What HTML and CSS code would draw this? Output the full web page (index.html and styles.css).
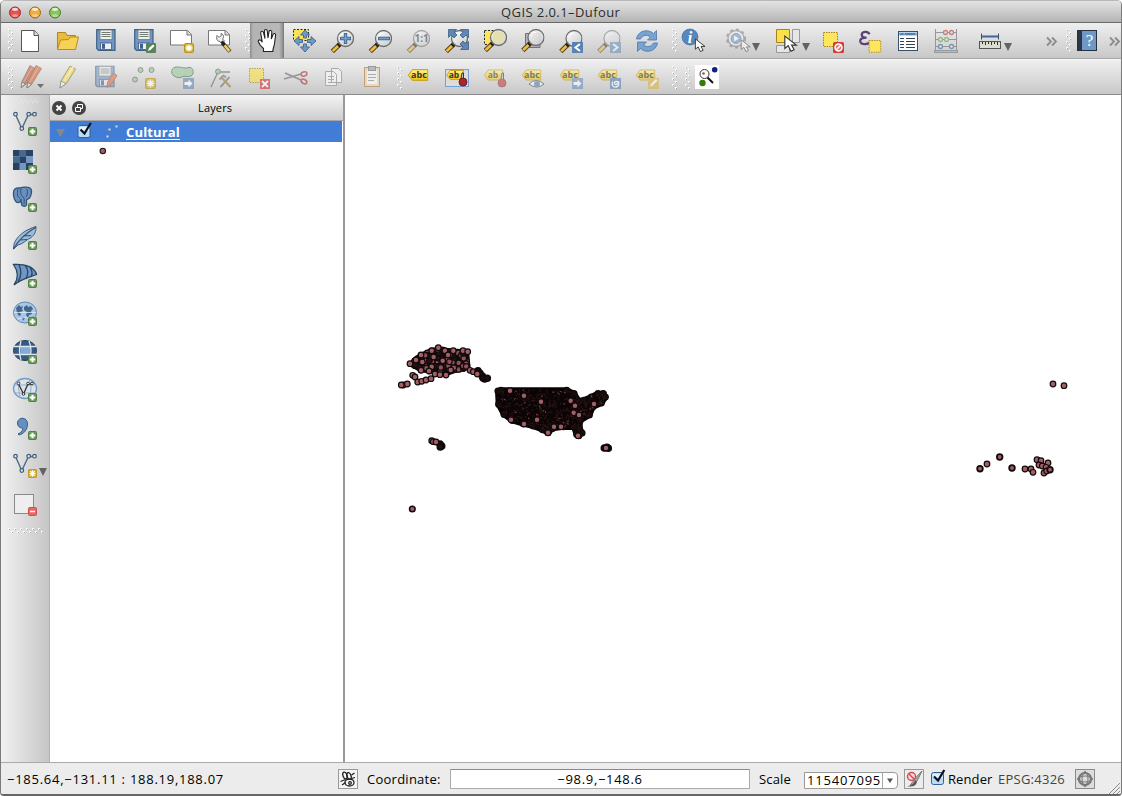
FILE: index.html
```html
<!DOCTYPE html>
<html lang="en">
<head>
<meta charset="utf-8">
<title>QGIS 2.0.1-Dufour</title>
<link rel="stylesheet" href="styles.css">
</head>
<body>
<svg class="defs" width="0" height="0" aria-hidden="true">
  <defs>
    <linearGradient id="lens" x1="0" y1="0" x2="1" y2="1"><stop offset="0" stop-color="#fff"/><stop offset="1" stop-color="#c9c9c9"/></linearGradient>
    <linearGradient id="tag" x1="0" y1="0" x2="0" y2="1"><stop offset="0" stop-color="#fff3a0"/><stop offset=".5" stop-color="#f8d93a"/><stop offset="1" stop-color="#efc51c"/></linearGradient>
    <pattern id="gripV" width="6" height="6" patternUnits="userSpaceOnUse"><rect width="2" height="2" fill="#fafafa"/><rect x="1" y="1" width="1" height="1" fill="#a8a8a8"/><rect x="3" y="3" width="2" height="2" fill="#fafafa"/><rect x="4" y="4" width="1" height="1" fill="#a8a8a8"/></pattern>
    <symbol id="grip" viewBox="0 0 6 24"><rect width="6" height="24" fill="url(#gripV)"/></symbol>
    <symbol id="gripH" viewBox="0 0 36 6"><rect width="36" height="6" fill="url(#gripV)"/></symbol>
    <symbol id="plus" viewBox="0 0 9 9"><rect x=".5" y=".5" width="8" height="8" rx="1" fill="#6c9a5c" stroke="#4f7f45"/><path d="M4.5 1.7v5.6M1.7 4.5h5.6" stroke="#fff" stroke-width="2"/></symbol>
    <symbol id="star" viewBox="0 0 10 10"><rect x=".5" y=".5" width="9" height="9" rx="1" fill="#d6ac28" stroke="#bd9414"/><path d="M5 1.4v7.2M1.4 5h7.2M2.5 2.5l5 5M7.500 2.500l-5 5" stroke="#fff" stroke-width="1.3"/></symbol>
    <symbol id="mag" viewBox="0 0 24 24"><path d="M2.300 22L10 14.500" stroke="#514529" stroke-width="4.600"/><path d="M2.700 21.600L8.500 16" stroke="#f3bd3c" stroke-width="2.700"/><path d="M8 16.500l3-3" stroke="#222" stroke-width="4"/><circle cx="15.500" cy="9" r="8" fill="url(#lens)" fill-opacity=".88" stroke="#6d6d6d" stroke-width="1.300"/><path d="M10.500 8a5 5 0 0 1 5-4" fill="none" stroke="#fff"/></symbol>
    <symbol id="cursor" viewBox="0 0 13 16"><path d="M1 1v11l3-2.500 2.500 5 2.800-1.400L7 9h4.300z" fill="#fff" stroke="#333"/></symbol>
    <symbol id="floppy" viewBox="0 0 20 22"><path d="M1 .7h18v20.600H2.500L.7 19.500V.7z" fill="#6f96c4" stroke="#3d6188" stroke-width="1.200"/><rect x="4" y="1" width="12" height="9.500" fill="#f1f1ea" stroke="#6a7a80" stroke-width=".8"/><path d="M5.500 3.500h9M5.500 5.500h9M5.500 7.500h9" stroke="#717c74"/><rect x="4.500" y="14" width="11" height="6.500" fill="#eeeef5" stroke="#42597d" stroke-width=".8"/><path d="M6 14.700h3v5H6z" fill="#415d8b"/></symbol>
    <symbol id="label" viewBox="0 0 21 13"><path d="M.7 6.300L5 .7h15.300v10.600H5z" fill="url(#tag)" stroke="#c49b12"/></symbol>
    <symbol id="vee" viewBox="0 0 24 20"><path d="M2.500 3l6.300 14L15.500 3h6" fill="none" stroke="#506c87" stroke-width="1.400"/><g fill="#dce5ed" stroke="#3c5a78" stroke-width="1.200"><circle cx="2.500" cy="2.700" r="1.800"/><circle cx="8.800" cy="17" r="1.800"/><circle cx="15.700" cy="2.700" r="1.800"/><circle cx="21.500" cy="2.700" r="1.800"/></g></symbol>
    <symbol id="arrowBadge" viewBox="0 0 11 11"><rect width="11" height="11" fill="#6f91bd"/><path d="M1.500 4h4V1.500l4 4-4 4V7h-4z" fill="#fff"/></symbol>
    <symbol id="check" viewBox="0 0 16 17"><rect x="1.500" y="3.500" width="12" height="12" rx="2" fill="#b9dcf7" stroke="#365e98"/><path d="M3 5h9.500v4H3z" fill="#e0f0fd"/><path d="M4 7.500l4 4L14.300 1" fill="none" stroke="#0b1019" stroke-width="2.200"/></symbol>
    <symbol id="down" viewBox="0 0 8 8"><path d="M0 0h8L4 8z" fill="#626262"/></symbol>
  </defs>
</svg>
<div class="window">
  <header class="titlebar">
    <svg class="lights" viewBox="0 0 64 22"><g stroke-width="1"><circle cx="15" cy="11.500" r="5.500" fill="#e95050" stroke="#96302f"/><circle cx="35" cy="11.500" r="5.500" fill="#f2ae3d" stroke="#9a671f"/><circle cx="55" cy="11.500" r="5.500" fill="#86c65a" stroke="#477b33"/></g><g fill="#fff" opacity=".75"><ellipse cx="15" cy="8.300" rx="3" ry="1.600"/><ellipse cx="35" cy="8.300" rx="3" ry="1.600"/><ellipse cx="55" cy="8.300" rx="3" ry="1.600"/><g opacity=".5"><ellipse cx="15" cy="14.500" rx="3" ry="1.500"/><ellipse cx="35" cy="14.500" rx="3" ry="1.500"/><ellipse cx="55" cy="14.500" rx="3" ry="1.500"/></g></g></svg>
    <h1 class="title">QGIS 2.0.1–Dufour</h1>
  </header>

  <div class="toolbar">
    <svg class="grip-slot" viewBox="1 23 10 35"><use href="#grip" x="8" y="29" width="6" height="24"/></svg>
    <svg class="tool" viewBox="11 23 38 35"><path d="M21.500 30.500h13l4 4.500v16.500h-17z" fill="#fff" stroke="#555"/><path d="M34 30.500v5h4.500" fill="#ddd" stroke="#555"/></svg>
    <svg class="tool" viewBox="49 23 38 35"><path d="M57.500 49V32.500h8l1.500 3h8.500V39" fill="#e9bd3b" stroke="#ad8527"/><path d="M57.500 49.500l3-9.500 8-.5 2-2.500h8l-3 12.500z" fill="#f8d257" stroke="#b98c25"/></svg>
    <svg class="tool" viewBox="87 23 38 35"><use href="#floppy" x="96" y="29" width="20" height="22"/></svg>
    <svg class="tool" viewBox="125 23 38 35"><use href="#floppy" x="134" y="29" width="20" height="22"/><rect x="146" y="43" width="10" height="10" rx="1" fill="#56845a"/><path d="M148 51l1-3 4-3.500 1.500 1.500-4 4z" fill="#fff"/></svg>
    <svg class="tool" viewBox="163 23 38 35"><path d="M170.500 30.500h17l4 4v10.500h-21z" fill="#fff" stroke="#777"/><path d="M187 30.500V35h4.500" fill="#ddd" stroke="#777"/><use href="#star" x="184" y="43" width="10" height="10"/></svg>
    <svg class="tool" viewBox="201 23 38 35"><path d="M208.500 30.500h17l4 4v10.500h-21z" fill="#fff" stroke="#777"/><path d="M225 30.500V35h4.500" fill="#ddd" stroke="#777"/><path d="M217 35.500c2 3 5 1 4-2 3 1 3 4 1.500 5.500l2 2-2.500 2.500-2-2c-3 0-4-3-3-6z" fill="#eee" stroke="#555" stroke-width=".9"/><path d="M222.500 43l7.500 8.500" stroke="#4b3d20" stroke-width="4"/><path d="M224.500 45.300l5 5.800" stroke="#efcd69" stroke-width="2.500"/><path d="M221.500 41.500l3 3.500" stroke="#222" stroke-width="3"/></svg>
    <svg class="gap9" viewBox="239 23 9 35"><use href="#grip" x="245" y="29" width="6" height="24"/></svg>
    <svg class="tool pressed" viewBox="248 23 38 35"><path d="M263.500 51.500v-3c-2.500-2-4.500-4.500-5.200-7-.3-2 2.500-2.500 4 .8l-1.600-9.300c-.2-2 2.200-2.500 2.800-.3l1.500 6-.6-7.500c0-2.300 2.700-2.300 2.900 0l.7 6.700 1-6.200c.3-1.900 3-1.600 2.800.4l-.5 7 1.700-4.500c.7-1.900 3-1.200 2.600.8l-1.200 8.800c-.2 2-1.500 3.500-1.600 7.300z" fill="#fff" stroke="#222" stroke-width="1.100"/></svg>
    <svg class="tool" viewBox="286 23 38 35"><path d="M293.500 29.500h15v11h-15z" fill="#fbe24e" stroke="#222" stroke-dasharray="2 1.500"/><g fill="#7099c6" stroke="#3f668f" stroke-width=".9"><path d="M305 30l4.500 5h-3v3h-3v-3h-3zM305 52l4.500-5h-3v-3h-3v3h-3zM294 41l5-4.500v3h3.500v3H299v3zM316 41l-5-4.500v3h-3.500v3h3.500v3z"/></g></svg>
    <svg class="tool" viewBox="324 23 38 35"><use href="#mag" x="330" y="29.500" width="24" height="24"/><path d="M345.500 33v11M340 38.500h11" stroke="#416b98" stroke-width="3.400"/><path d="M345.500 34v9M341 38.500h9" stroke="#73a2cf" stroke-width="1.500"/></svg>
    <svg class="tool" viewBox="362 23 38 35"><use href="#mag" x="368" y="29.500" width="24" height="24"/><path d="M378 38.500h12" stroke="#416b98" stroke-width="3.400"/><path d="M379 38.500h10" stroke="#73a2cf" stroke-width="1.500"/></svg>
    <svg class="tool" viewBox="400 23 38 35"><g opacity=".52"><use href="#mag" x="406" y="29.500" width="24" height="24"/><text x="421.700" y="42" class="one-one">1:1</text></g></svg>
    <svg class="tool" viewBox="438 23 38 35"><use href="#mag" x="444" y="29.500" width="24" height="24"/><g fill="#5f87b4" stroke="#385f8b" stroke-width=".8"><path d="M448.500 29.500h8L454 32l3 3-3 3-3-3-2.500 2.500zM468.500 29.500h-8L463 32l-3 3 3 3 3-3 2.500 2.500zM468.500 49.500h-8L463 47l-3-3 3-3 3 3 2.500-2.500z"/></g></svg>
    <svg class="tool" viewBox="476 23 38 35"><path d="M484.500 30.500h17v14h-17z" fill="#fde55c" stroke="#222" stroke-dasharray="2 1.500"/><use href="#mag" x="483" y="28.500" width="24" height="24"/><circle cx="498.500" cy="37.500" r="6.500" fill="#e4dfb0"/></svg>
    <svg class="tool" viewBox="514 23 38 35"><path d="M525.500 33.500H540v14h-14.500z" fill="#b5afba" stroke="#776f7c"/><use href="#mag" x="520.500" y="28.500" width="24" height="24"/></svg>
    <svg class="tool" viewBox="552 23 38 35"><use href="#mag" x="558.500" y="29.500" width="24" height="24"/><rect x="572" y="42" width="11" height="11" fill="#5983b4"/><path d="M580 44l-4.500 3.500 4.500 3.500" fill="none" stroke="#fff" stroke-width="2"/></svg>
    <svg class="tool" viewBox="590 23 38 35"><g opacity=".48"><use href="#mag" x="596.500" y="29.500" width="24" height="24"/><rect x="610" y="42" width="11" height="11" fill="#5983b4"/><path d="M613 44l4.500 3.500-4.500 3.500" fill="none" stroke="#fff" stroke-width="2"/></g></svg>
    <svg class="tool" viewBox="628 23 38 35"><g fill="#77a2d1" stroke="#4b78ab" stroke-width=".8"><path d="M636.500 39c1-8 11-11 17-5.500l3-3v9.500h-9l3-3c-4-3-8-1.500-10 2z"/><path d="M657.500 43c-1 8-11 11-17 5.500l-3 3V42h9l-3 3c4 3 8 1.500 10-2z"/></g></svg>
    <svg class="gap8" viewBox="666 23 8 35"><use href="#grip" x="672" y="29" width="6" height="24"/></svg>
    <svg class="tool" viewBox="674 23 38 35"><circle cx="690" cy="37" r="8" fill="#5687bd" stroke="#3e6ea5" stroke-width=".7"/><text x="690" y="42.500" class="info">i</text><use href="#cursor" x="694" y="38" width="13" height="15"/></svg>
    <svg class="tool wide58" viewBox="712 23 58 35"><g opacity=".52"><circle cx="736" cy="38.500" r="8" fill="#f2f2f2" stroke="#777" stroke-width="1.300"/><circle cx="736" cy="38.500" r="9" fill="none" stroke="#777" stroke-width="2" stroke-dasharray="3 3"/><circle cx="736" cy="38.500" r="5" fill="#6797c9" stroke="#44719f"/><path d="M734 35.500l5 3-5 3z" fill="#fff"/><use href="#cursor" x="740" y="39" width="12" height="14"/></g><use href="#down" x="752" y="43" width="8" height="8"/></svg>
    <svg class="tool wide44" viewBox="770 23 44 35"><path d="M776.500 29.500h13v13h-13z" fill="#fae14c" stroke="#a8821b"/><path d="M792.500 29.500h7v13h-7zM776.500 45.500h13v7h-13z" fill="#e6e6e6" stroke="#999"/><use href="#cursor" x="783" y="35" width="16" height="18"/><use href="#down" x="802" y="43" width="8" height="8"/></svg>
    <svg class="tool" viewBox="814 23 38 35"><path d="M823.500 32.500h14v14h-14z" fill="#fde55c" stroke="#a8821b" stroke-dasharray="1.500 1"/><rect x="833" y="42" width="11" height="11" rx="1.500" fill="#d23e3c"/><circle cx="838.500" cy="47.500" r="3.500" fill="#e87775" stroke="#fff" stroke-width="1.500"/><path d="M836 50l5-5" stroke="#fff" stroke-width="1.500"/></svg>
    <svg class="tool" viewBox="852 23 38 35"><path d="M870 34c-2-4-8-2.500-8 .5 0 2 2 3 5 3-4 0-7 1-6.500 4 1 4 9 3.500 10.500-.5" fill="none" stroke="#5b4474" stroke-width="2.300"/><path d="M869.500 40.500h12v12h-12z" fill="#fde55c" stroke="#b18b22" stroke-dasharray="1.500 1"/></svg>
    <svg class="tool" viewBox="889 23 38 35"><rect x="898.500" y="31.500" width="19" height="19" fill="#fff" stroke="#34536f"/><path d="M899 34h18" stroke="#7caee0" stroke-width="3"/><path d="M900.500 34h3M905 34h10" stroke="#31506d"/><path d="M900 38.500h4M900 41.500h4M900 44.500h4M900 47.500h4M906 38.500h9M906 41.500h9M906 44.500h9M906 47.500h9" stroke="#34424b"/></svg>
    <svg class="tool" viewBox="927 23 38 35"><path d="M935.500 29v22M956.500 29v22M936 32.500h20M936 39.500h20M936 46.500h20" stroke="#969696"/><rect x="934.500" y="50.500" width="23" height="2" fill="#bbb" stroke="#999"/><g stroke-width="1.300" fill="#dedede"><g stroke="#c6817d"><circle cx="945.500" cy="32.500" r="2"/><circle cx="951.500" cy="32.500" r="2"/></g><g stroke="#94b890"><circle cx="940.500" cy="39.500" r="2"/><circle cx="946.500" cy="39.500" r="2"/></g><g stroke="#7596b4"><circle cx="940.500" cy="46.500" r="2"/><circle cx="951.500" cy="46.500" r="2"/></g></g></svg>
    <svg class="tool wide53" viewBox="965 23 53 35"><path d="M981 36.500h18" stroke="#3f6992" stroke-width="2"/><path d="M981.500 33.500v6M998.500 33.500v6" stroke="#34536f"/><rect x="979.500" y="41.500" width="21" height="7" fill="#d9ded1" stroke="#555"/><path d="M982.500 42v2M985.500 42v3M988.500 42v2M991.500 42v3M994.500 42v2M997.500 42v3" stroke="#333"/><use href="#down" x="1004" y="43" width="8" height="8"/></svg>
    <svg class="tool rest" viewBox="1018 23 103 35"><g fill="none" stroke="#8b8b8b" stroke-width="1.800"><path d="M1047 37.500l4 4-4 4M1052 37.500l4 4-4 4M1110 37.500l4 4-4 4M1115 37.500l4 4-4 4"/></g><use href="#grip" x="1066" y="29" width="6" height="24"/><rect x="1077.500" y="30.500" width="19" height="20" fill="#6f98c6" stroke="#25323e"/><path d="M1078 31h4v19h-4z" fill="#283846"/><text x="1089.500" y="46" class="help">?</text></svg>
  </div>

  <div class="toolbar second">
    <svg class="grip-slot" viewBox="1 59 10 36"><use href="#grip" x="8" y="66" width="6" height="24"/></svg>
    <svg class="tool" viewBox="11 59 38 36"><g opacity=".62"><g stroke="#765548" stroke-width=".8"><path d="M30 65.500l5 3-9 15.500-4.500 3.500.5-6z" fill="#c26040"/><path d="M36 65.500l5.500 3-10 16-4.500 3.500.5-6z" fill="#df6941"/></g><path d="M38.500 67.500l-9 15M32.500 67l-9 15" stroke="#f09a70"/><path d="M22 82l3.500 2-4.500 3.500zM27.500 82.500l4 2-4.500 3.500z" fill="#f8eedf" stroke="#555"/></g><path d="M37 84h7l-3.500 4z" fill="#707070"/></svg>
    <svg class="tool" viewBox="49 59 38 36"><g opacity=".6"><path d="M70 66l5.500 3-9 14.500L60 88l1-7z" fill="#f5dc4f" stroke="#887836"/><path d="M73 67l-9.500 15" stroke="#fff2a2" stroke-width="1.500"/><path d="M61 81l5 2.500L60 88z" fill="#fff" stroke="#777"/></g></svg>
    <svg class="tool" viewBox="87 59 38 36"><g opacity=".55"><use href="#floppy" x="95" y="65.500" width="20" height="22"/><path d="M113 73l4 2.500-6 9-4 3 .5-5z" fill="#de6941" stroke="#9a5139"/></g></svg>
    <svg class="tool" viewBox="125 59 38 36"><g opacity=".65"><g fill="#a8c7a3" stroke="#5e7c5d"><circle cx="140.500" cy="70" r="2.500"/><circle cx="151.500" cy="70" r="2.500"/><circle cx="135" cy="79.500" r="2.500"/></g><use href="#star" x="145" y="78" width="11" height="11"/></g></svg>
    <svg class="tool" viewBox="163 59 38 36"><g opacity=".65"><path d="M174 76c-4-3-3-9 3-9 5 0 8 2 12 .5 4-1 6 6 2 8.500-4 2-6-1-9 1-3 1.500-5 .5-8-1z" fill="#9fcaa0" stroke="#527852"/><use href="#arrowBadge" x="183" y="78" width="11" height="11"/></g></svg>
    <svg class="tool" viewBox="201 59 38 36"><g opacity=".6"><path d="M211 87l7-15h12" fill="none" stroke="#666" stroke-width="1.300"/><circle cx="218" cy="71.500" r="2.500" fill="#93bd8f" stroke="#557552"/><path d="M229.500 77l-9 10" stroke="#666" stroke-width="1.800"/><path d="M222 78l8.500 9" stroke="#a87830" stroke-width="2.300"/><path d="M219.500 79.500l4-4 2.500 2" fill="none" stroke="#777" stroke-width="2"/></g></svg>
    <svg class="tool" viewBox="239 59 38 36"><g opacity=".65"><path d="M249.500 68.500h14v14h-14z" fill="#f7df55" stroke="#a8821b" stroke-dasharray="1.500 1"/><rect x="260" y="79" width="10" height="10" fill="#cf4240"/><path d="M262 81l6 6M268 81l-6 6" stroke="#fff" stroke-width="1.800"/></g></svg>
    <svg class="tool" viewBox="277 59 38 36"><g opacity=".65" fill="none"><path d="M285 73l16 7M284 79l17-5" stroke="#727272" stroke-width="1.700"/><g stroke="#b53c42" stroke-width="1.500"><ellipse cx="304" cy="74" rx="3" ry="2" transform="rotate(-15 304 74)"/><ellipse cx="304" cy="81.500" rx="3" ry="2" transform="rotate(30 304 81.500)"/></g></g></svg>
    <svg class="tool" viewBox="315 59 37 36"><g fill="#eee" stroke="#aaa"><path d="M331.500 68.500h7l3 3v11h-10zM325.500 71.500h8l3 3v11h-11z"/><path d="M328 76.500h6M328 79.500h6M328 82.500h6"/></g></svg>
    <svg class="tool" viewBox="352 59 38 36"><rect x="364.500" y="67.500" width="15" height="19" fill="#e6d8c3" stroke="#c2a075"/><rect x="367" y="70" width="10" height="14" fill="#eee"/><rect x="368.500" y="66.500" width="7" height="4" fill="#bbb" stroke="#999"/><path d="M368 74.500h8M368 77.500h8M368 80.500h6" stroke="#aaa"/></svg>
    <svg class="gap10" viewBox="390 59 10 36"><use href="#grip" x="397" y="66" width="6" height="24"/></svg>
    <svg class="tool" viewBox="400 59 38 36"><use href="#label" x="407.500" y="69" width="21" height="13"/><text x="419" y="78" class="abc">abc</text></svg>
    <svg class="tool" viewBox="438 59 38 36"><rect x="445.500" y="69.500" width="23" height="17" fill="#dcdcdc" stroke="#73a0d5"/><use href="#label" x="446" y="69.500" width="18" height="12"/><text x="454" y="78" class="abc small">ab</text><path d="M461 79l1-6h1.500v7" fill="#ccc" stroke="#333"/><circle cx="463" cy="82" r="4" fill="#a9272b" stroke="#721a1d"/></svg>
    <svg class="tool" viewBox="476 59 38 36"><g opacity=".55"><use href="#label" x="483.500" y="69" width="20" height="13"/><text x="493" y="78" class="abc small">ab</text><path d="M501 79l1-6h1.500v7" fill="#ccc" stroke="#333"/><circle cx="502" cy="83" r="4" fill="#bd3539" stroke="#973034"/></g></svg>
    <svg class="tool" viewBox="514 59 38 36"><g opacity=".6"><use href="#label" x="521.500" y="69" width="20" height="13"/><text x="532" y="78" class="abc">abc</text><path d="M529 84q7-7 15 0-7 6-15 0z" fill="#fff" stroke="#555"/><circle cx="537" cy="84" r="3" fill="#5687bb"/></g></svg>
    <svg class="tool" viewBox="552 59 38 36"><g opacity=".6"><use href="#label" x="559.500" y="69" width="20" height="13"/><text x="570" y="78" class="abc">abc</text><use href="#arrowBadge" x="572" y="78" width="11" height="11"/></g></svg>
    <svg class="tool" viewBox="590 59 38 36"><g opacity=".6"><use href="#label" x="597.500" y="69" width="20" height="13"/><text x="608" y="78" class="abc">abc</text><rect x="610" y="78" width="11" height="11" fill="#5983b4"/><path d="M613 81.500c-2 3 0 6 3 5.500 4-1 3.500-6 0-5.500-2.500.5-2 3.500.5 3l2.500-3" fill="none" stroke="#fff" stroke-width="1.300"/></g></svg>
    <svg class="tool" viewBox="628 59 38 36"><g opacity=".6"><use href="#label" x="635.500" y="69" width="20" height="13"/><text x="646" y="78" class="abc">abc</text><rect x="648" y="78" width="11" height="11" fill="#dcb646"/><path d="M650 87l1-3 5-5 1.500 1.500-5 5z" fill="#fff"/></g></svg>
    <svg class="tool wide60" viewBox="666 59 60 36"><use href="#grip" x="672" y="66" width="6" height="24"/><use href="#grip" x="685" y="66" width="6" height="24"/><rect x="695" y="65" width="24" height="24" fill="#fff"/><path d="M707 77l6 6" stroke="#111" stroke-width="2"/><circle cx="704.500" cy="74" r="4.500" fill="#fff" stroke="#333"/><circle cx="703.500" cy="73.500" r="1.300" fill="#b14a44"/><circle cx="714.700" cy="69.700" r="2.800" fill="#10227f"/><circle cx="702.500" cy="83" r="3.200" fill="#347b0c"/></svg>
  </div>

  <main class="workspace">
    <nav class="sidebar">
      <svg class="side-grip" viewBox="1 96 48 12"><use href="#gripH" x="8" y="102" width="36" height="6"/></svg>
      <svg class="side-tool" viewBox="1 104 48 38"><use href="#vee" x="13" y="111.500" width="24" height="20"/><use href="#plus" x="28" y="127" width="9" height="9"/></svg>
      <svg class="side-tool" viewBox="1 142 48 38"><path d="M13 150h20v20H13z" fill="#7198c3"/><path d="M13 150h6v6h-6zM26 150h7v6h-7zM19.500 156.500H26v6.500h-6.500zM13 163h6.500v7H13zM26 163h7v7h-7z" fill="#2a4260"/><path d="M19 150h7v6.500h-7zM13 156.500h6.500v6.500H13z" fill="#47698e"/><use href="#plus" x="28" y="165" width="9" height="9"/></svg>
      <svg class="side-tool" viewBox="1 180 48 38"><path d="M20 202c-3 2-6-1-6.500-7-.5-7 3-7.500 6.500-7 3-1.500 8-1 10 0 3 2 1 8-.5 10l-3 2v5c-1 2-5 1.500-5-1l-.5-5z" fill="#688fbd" stroke="#34547a" stroke-width="1.300"/><path d="M18 189c-1 5-1 8 2 9M21 188c-1 4 0 8 2 9s1 4 1 7M27 189c1 4 0 7-1 8" fill="none" stroke="#34547a"/><use href="#plus" x="28" y="203" width="9" height="9"/></svg>
      <svg class="side-tool" viewBox="1 218 48 38"><path d="M13.500 249c0-7 3-11 9-16 4-3 9-5 13.500-6.500 0 5-1 8-5 11-4 2-9 7-13 7.500z" fill="#9abbd9" stroke="#3d5e80"/><path d="M13.500 249c5-9 11-15 22.500-22M20 240l7-.5M23 236l8-.5" fill="none" stroke="#35536f" stroke-width="1.200"/><use href="#plus" x="28" y="241" width="9" height="9"/></svg>
      <svg class="side-tool" viewBox="1 256 48 38"><path d="M13.500 264.500c10-1 21 2 23 10-8 3-16 5-22.500 10.500 5-7 4-14-.5-20.500z" fill="#6f98c4" stroke="#294866" stroke-width="1.300"/><path d="M19 265c3 6 2 12-1 17M25 265c4 5 3 9 1 14M30 267c2 4 3 6 1 10" fill="none" stroke="#294866" stroke-width="1.300"/><use href="#plus" x="28" y="279" width="9" height="9"/></svg>
      <svg class="side-tool" viewBox="1 294 48 38"><ellipse cx="25" cy="312.500" rx="11.500" ry="10.500" fill="#a8c7e6" stroke="#6186b0"/><path d="M16 308l3-3 2 2 2-1-1 3 1 2-3 1 1 3-2 1-2-3zM24 307l3-2 1 2 3-1 2 3-2 2 1 3-3 1-1 3-2-3 1-3-3-2zM22 317l3 1-2 3zM31 318l3-2-2 4z" fill="#45678a"/><path d="M14 312.500h22M17 319q8-3 16 0" fill="none" stroke="#e0ebf5" stroke-width=".8"/><use href="#plus" x="28" y="317" width="9" height="9"/></svg>
      <svg class="side-tool" viewBox="1 332 48 38"><ellipse cx="25" cy="350.500" rx="11.500" ry="10" fill="#355b84" stroke="#263c50"/><path d="M20.500 346h9.500v9h-9.500z" fill="#82abd5"/><path d="M14 346.500h22M14 354.500h22M21 341q-3 10 0 19M29 341q4 10 0 19" fill="none" stroke="#dfe8f0" stroke-width="1.300"/><use href="#plus" x="28" y="355" width="9" height="9"/></svg>
      <svg class="side-tool" viewBox="1 370 48 38"><ellipse cx="25" cy="388.500" rx="11.500" ry="10" fill="#dce3e9" stroke="#709bcb" stroke-width="1.300"/><path d="M14 385h22M15 393h20M20 379q-3 9 0 18M29 379q4 9 0 18" fill="none" stroke="#91afcd"/><path d="M18.500 384l5 10 4.500-10h4" fill="none" stroke="#333" stroke-width="1.300"/><g fill="#fff" stroke="#333"><circle cx="18.500" cy="383.500" r="1.300"/><circle cx="23.500" cy="394" r="1.300"/><circle cx="28" cy="383.500" r="1.300"/><circle cx="32" cy="383.500" r="1.300"/></g><use href="#plus" x="28" y="393" width="9" height="9"/></svg>
      <svg class="side-tool" viewBox="1 408 48 38"><path d="M18 434c4-2 5-4 4.500-6-3 0-5-2-5-5 0-6 10-7 10 1 0 6-4 10-8.500 11z" fill="#648fc0" stroke="#375f90"/><use href="#plus" x="28" y="431" width="9" height="9"/></svg>
      <svg class="side-tool" viewBox="1 446 48 38"><use href="#vee" x="13" y="453.500" width="24" height="20"/><use href="#star" x="28" y="469" width="9" height="9"/><use href="#down" x="39" y="468" width="8" height="8"/></svg>
      <svg class="side-tool" viewBox="1 484 48 38"><rect x="14.500" y="494.500" width="19" height="19" fill="#eee" stroke="#8b8b85"/><rect x="28.500" y="507.500" width="8" height="8" rx="1" fill="#ea6762" stroke="#d94a45"/><path d="M30 511.500h5" stroke="#fff" stroke-width="1.500"/></svg>
      <svg class="side-grip" viewBox="1 522 48 12"><use href="#gripH" x="8" y="528" width="36" height="6"/></svg>
    </nav>
    <section class="layers">
      <div class="panel-head">
        <svg class="panel-buttons" viewBox="0 0 40 24"><circle cx="9" cy="12" r="7" fill="#444"/><path d="M6.500 9.500l5 5M11.500 9.500l-5 5" stroke="#fff" stroke-width="2"/><circle cx="29" cy="12" r="7" fill="#444"/><path d="M27.500 11V8.500h5v4H31M25.500 11.500h5v4h-5z" fill="none" stroke="#fff"/></svg>
        <h2 class="panel-title">Layers</h2>
      </div>
      <div class="layer-row">
        <svg class="layer-icons" viewBox="50 122 75 20"><path d="M56 129h9l-4.500 8z" fill="#888"/><use href="#check" x="76.500" y="122" width="16" height="17"/><g fill="#d6dfe2" stroke="#76909f" stroke-width=".5"><circle cx="107.500" cy="136.500" r="1.200"/><circle cx="109.500" cy="129.500" r="1.200"/><circle cx="116.500" cy="126.500" r="1.200"/></g></svg>
        <span class="layer-name">Cultural</span>
      </div>
      <svg class="symbol-row" viewBox="50 142 75 20"><circle cx="102.800" cy="151" r="2.700" fill="#a55d63" stroke="#251719" stroke-width="1.100"/></svg>
    </section>
    <section class="map"><svg id="canvas" class="canvas" viewBox="345 95 775 667"></svg></section>
  </main>

  <footer class="status">
    <span class="extent">−185.64,−131.11 : 188.19,188.07</span>
    <svg class="status-btn" viewBox="0 0 20 20"><rect x=".5" y=".5" width="19" height="19" fill="#f5f5f5" stroke="#999"/><g fill="none" stroke="#222" stroke-width="1.300"><ellipse cx="7" cy="6.500" rx="2" ry="3.500" transform="rotate(-20 7 6.500)"/><ellipse cx="11" cy="7" rx="2" ry="3.500" transform="rotate(-20 11 7)"/><ellipse cx="11.500" cy="13.500" rx="4.500" ry="3.500"/><circle cx="12" cy="14" r="1.300"/><path d="M2.500 12.500l5-2M4 16l3.500-2.500M13.500 6l3-2M13.500 9.500l3.500-1"/></g></svg>
    <span class="coord-label">Coordinate:</span>
    <div class="coord-input">−98.9,−148.6</div>
    <span class="scale-label">Scale</span>
    <div class="scale-combo"><span class="scale-value">115407095</span><svg class="combo-arrow" viewBox="0 0 14 15"><path d="M4 5.500h6L7 10z" fill="#555"/></svg></div>
    <svg class="status-btn stop" viewBox="0 0 20 20"><rect x=".5" y=".5" width="19" height="19" fill="#ececec" stroke="#999"/><path d="M18 2l-5 10-3 3-4 1.500 3-4 3-4z" fill="#aaa" stroke="#777"/><path d="M11 11c-1 4-4 6-8 6 5 1.500 9 0 10-4z" fill="#555"/><circle cx="7.500" cy="7.500" r="4" fill="#f3dddd" stroke="#d44b4c" stroke-width="1.400"/><path d="M5 5l5 5" stroke="#d44b4c" stroke-width="1.400"/></svg>
    <svg class="render-check" viewBox="0 0 16 17"><use href="#check" width="16" height="17"/></svg>
    <span class="render-label">Render</span>
    <span class="epsg">EPSG:4326</span>
    <svg class="status-btn crs" viewBox="0 0 20 20"><rect x=".5" y=".5" width="19" height="19" fill="#ddd" stroke="#8a8a8a"/><g fill="none" stroke="#777"><circle cx="10" cy="10" r="6" stroke-width="2.200"/><ellipse cx="10" cy="10" rx="3" ry="6"/><ellipse cx="10" cy="10" rx="6" ry="3"/></g><path d="M10 1.500l2.500 3h-5zM10 18.500l2.500-3h-5zM1.500 10l3-2.500v5zM18.500 10l-3-2.500v5z" fill="#777"/></svg>
    <svg class="resize" viewBox="0 0 12 12"><path d="M1 12L12 1M5 12l7-7M9 12l3-3" stroke="#8c8c8c"/></svg>
  </footer>
</div>
<script src="map.js"></script>
</body>
</html>
```
FILE: styles.css
```css
* { box-sizing: border-box; }
body { margin: 0; background: #fff; font-family: "Open Sans", "Noto Sans", sans-serif; font-size: 13px; color: #000; }
svg { display: block; flex: none; }
.defs { position: absolute; }
.window { width: 1122px; height: 796px; display: flex; flex-direction: column; overflow: hidden; border: 1px solid #7b7b7b; border-top-color: #b8b8b8; border-bottom: 2px solid #666; border-radius: 5px 5px 4px 4px; background: #ececec; }
.titlebar { flex: none; height: 22px; display: flex; align-items: center; background: linear-gradient(#e4e4e4, #b4b4b4); border-bottom: 1px solid #696969; }
.lights { width: 64px; height: 22px; margin-left: -1px; }
.title { margin: 0; padding-left: 437px; font-size: 13px; font-weight: 400; line-height: 20px; color: #2c2c2c; letter-spacing: .42px; white-space: nowrap; }
.toolbar { flex: none; height: 36px; display: flex; background: linear-gradient(#efefef, #c8c8c8); border-bottom: 1px solid #a5a5a5; }
.toolbar.second { height: 36px; border-top: 1px solid #f8f8f8; border-bottom-color: #8b8b8b; }
.tool { width: 38px; height: 35px; }
.grip-slot { width: 10px; height: 35px; overflow: visible; }
.second .tool, .second .grip-slot, .second .gap10 { height: 36px; margin-top: -1px; }
.second .tool:nth-child(10) { width: 37px; }
.gap8, .gap9, .gap10 { height: 35px; overflow: visible; position: relative; }
.gap8 { width: 8px; }
.gap9 { width: 9px; }
.gap10 { width: 10px; }
.tool.wide58 { width: 58px; }
.tool.wide44 { width: 44px; }
.tool.wide53 { width: 53px; }
.tool.wide60 { width: 60px; }
.tool.rest { width: 103px; }
.wide44 + .tool + .tool { width: 37px; }
.pressed { background: linear-gradient(90deg, transparent 2px, #8d8d8d 2px, #b3b3b3 5px, #b9b9b9 31px, #999 34px, #777 36px, transparent 36px); }
.one-one { font: bold 10px "Open Sans", sans-serif; text-anchor: middle; fill: #333; }
.info { font: italic bold 16px "Liberation Serif", serif; text-anchor: middle; fill: #fff; }
.help { font: 17px "Liberation Serif", serif; text-anchor: middle; fill: #fff; }
.abc { font: bold 9px "Open Sans", sans-serif; text-anchor: middle; fill: #3b3520; letter-spacing: .1px; }
.abc.small { font-size: 8.5px; }
.workspace { flex: 1; min-height: 0; display: flex; }
.sidebar { width: 49px; flex: none; border-right: 1px solid #b2b2b2; background: linear-gradient(90deg, #f1f1f1, #c6c6c6); display: flex; flex-direction: column; }
.side-tool { width: 48px; height: 38px; }
.side-grip { width: 48px; height: 12px; }
.side-grip:first-child { height: 9px; overflow: visible; }
.layers { width: 293px; flex: none; background: #fff; }
.panel-head { height: 26px; display: flex; align-items: center; background: linear-gradient(#f4f4f4, #cdcdcd); border-bottom: 1px solid #a5a5a5; }
.panel-buttons { width: 40px; height: 24px; }
.panel-title { margin: 0; padding-left: 108px; font-size: 11px; font-weight: 400; letter-spacing: .15px; }
.layer-row { height: 21px; width: 292px; display: flex; align-items: center; background: #417dd6; color: #fff; }
.layer-icons { width: 76px; height: 20px; padding-right: 1px; }
.layer-name { font-weight: 700; line-height: 18px; font-size: 13px; letter-spacing: .15px; text-decoration: underline; text-underline-offset: 2px; }
.symbol-row { width: 75px; height: 20px; }
.map { flex: 1; background: #fff; border-left: 2px solid #999; }
.canvas { width: 775px; height: 667px; }
.status { flex: none; height: 32px; display: flex; align-items: center; background: #ececec; border-top: 1px solid #aaa; white-space: nowrap; }
.extent { width: 331px; margin-left: 6px; letter-spacing: .74px; }
.status-btn { width: 20px; height: 20px; }
.coord-label { width: 83px; margin-left: 9px; letter-spacing: .25px; }
.coord-input { width: 300px; height: 20px; background: #fff; border: 1px solid #aaa; border-top-color: #8a8a8a; text-align: center; line-height: 18px; letter-spacing: .7px; }
.scale-label { width: 45px; margin-left: 9px; letter-spacing: .15px; }
.scale-combo { width: 94px; height: 17px; margin-top: 3px; display: flex; background: #fff; border: 1px solid #999; border-radius: 0 4px 4px 0; line-height: 15px; }
.scale-value { width: 78px; padding-left: 2px; letter-spacing: .8px; border-right: 1px solid #aaa; }
.combo-arrow { width: 14px; height: 15px; }
.stop { margin-left: 6px; }
.render-check { width: 16px; height: 17px; margin: -3px 2px 0 6px; }
.render-label { width: 50px; letter-spacing: .1px; }
.epsg { width: 77px; color: #444; letter-spacing: .25px; }
.resize { width: 12px; height: 12px; margin: 18px 0 0 13px; }
```
FILE: map.js
```js
(function () {
  const svg = document.getElementById('canvas');
  const parts = [];
  let seed = 17;
  const rand = () => (seed = (seed * 16807) % 2147483647) / 2147483647;
  const dot = (x, y, fill = '#a35f66', width = 1.2) =>
    parts.push(`<circle cx="${x.toFixed(1)}" cy="${y.toFixed(1)}" r="2.8" fill="${fill}" stroke="#110a0b" stroke-width="${width}"/>`);

  const inside = (x, y, poly) => {
    let hit = false;
    for (let i = 0, j = poly.length - 1; i < poly.length; j = i++) {
      const [xi, yi] = poly[i], [xj, yj] = poly[j];
      if (yi > y !== yj > y && x < (xj - xi) * (y - yi) / (yj - yi) + xi) hit = !hit;
    }
    return hit;
  };
  const local = (list, ox, oy) => list.map(([x, y]) => [ox + x / 3, oy + y / 3]);

  // Dense mainland cluster
  const mainland = local([[324,168],[333,166],[530,166],[552,176],[566,198],[582,196],[604,186],[624,176],[640,176],[646,186],[634,204],[608,216],[598,240],[571,256],[568,278],[576,294],[566,302],[560,298],[552,276],[520,275],[488,280],[474,293],[458,284],[430,273],[400,266],[367,256],[342,238],[326,208]], 390, 335);
  parts.push(`<polygon points="${mainland.map(p => p.join()).join(' ')}" fill="#0c0506" stroke="#080405" stroke-width="6" stroke-linejoin="round"/>`);
  mainland.forEach(([x, y]) => dot(x, y, '#1d0c0e', 1.6));
  for (let i = 0; i < 620; i++) {
    const x = 494 + rand() * 114, y = 388 + rand() * 48;
    if (!inside(x, y, mainland)) continue;
    const a = rand() * 6.28;
    parts.push(`<path d="M${x.toFixed(1)} ${y.toFixed(1)}l${(Math.cos(a) * 1.7).toFixed(1)} ${(Math.sin(a) * 1.7).toFixed(1)}" stroke="${rand() > .88 ? '#9a5860' : '#3b1a1d'}" stroke-width=".9"/>`);
  }
  local([[360,167],[402,182],[453,200],[363,254],[402,267],[441,254],[492,275],[513,275],[474,293],[564,302],[551,233],[567,240],[555,212],[542,197],[612,207]], 390, 335).forEach(([x, y]) => dot(x, y));

  // Northern cluster
  const north = local([[118,50],[145,42],[180,48],[230,50],[234,98],[200,105],[168,116],[140,112],[90,103],[62,87],[90,62]], 390, 335);
  parts.push(`<polygon points="${north.map(p => p.join()).join(' ')}" fill="#150a0c" stroke="#0b0607" stroke-width="5" stroke-linejoin="round"/>`);
  for (let i = 0; i < 200; i++) {
    const x = 409 + rand() * 62, y = 347 + rand() * 28;
    if (inside(x, y, north)) dot(x, y, rand() > .4 ? '#8f5359' : '#241114');
  }
  local([[125,47],[145,38],[165,47],[190,47],[219,47],[233,50],[93,60],[78,75],[60,86],[97,81],[131,66],[174,60],[158,77],[125,95],[93,106],[117,108],[135,117],[182,105],[168,120],[150,119],[68,121],[75,126],[83,141],[95,139],[108,135],[123,131],[40,150],[52,147],[34,150],[240,106],[250,110]], 390, 335).forEach(([x, y]) => dot(x, y));
  local([[264,107],[270,115],[277,123],[284,132],[279,129],[292,130]], 390, 335).forEach(([x, y]) => dot(x, y, '#211013', 2));

  // Islands
  local([[150,327],[155,333],[151,336],[643,339],[655,340],[651,337]], 390, 335).forEach(([x, y]) => dot(x, y, '#291315', 2));
  local([[262,117],[125,317],[130,320],[138,321],[648,339]], 390, 335).forEach(([x, y]) => dot(x, y));
  dot(412.3, 509, '#a35f66', 1.5);

  // Eastern points
  local([[279,42],[312,47],[60,296],[81,282],[119,261],[156,294],[195,297],[213,297],[219,307],[231,269],[243,272],[237,285],[247,288],[264,279],[258,292],[252,309],[260,303],[270,299]], 960, 370).forEach(([x, y], i) => dot(x, y, '#a35f66', [2, 4, 5, 17].includes(i) ? 1.8 : 1.2));

  svg.innerHTML = parts.join('');
})();
```
